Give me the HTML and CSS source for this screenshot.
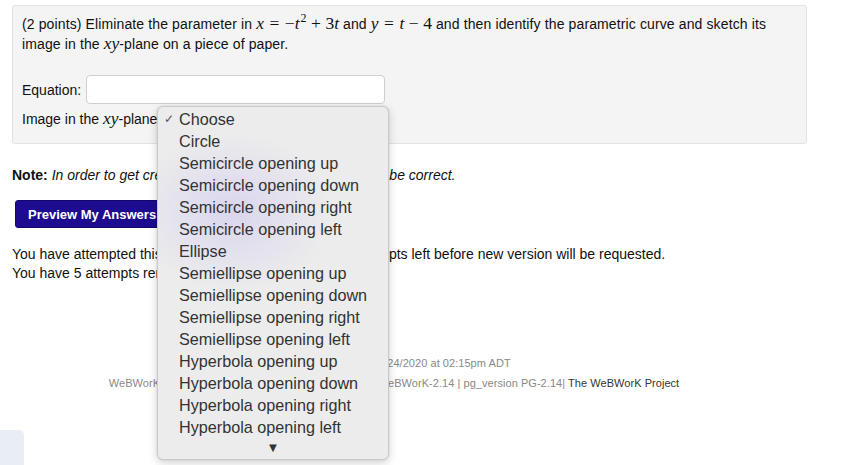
FILE: index.html
```html
<!DOCTYPE html>
<html>
<head>
<meta charset="utf-8">
<link rel="stylesheet" href="styles.css">
</head>
<body>
<div class="page">
  <div class="problem">
    <p class="statement">(2 points) Eliminate the parameter in <span class="math"><i>x</i><span class="rel">=</span>−<i>t</i><sup>2</sup><span class="bin">+</span>3<i>t</i></span> and <span class="math"><i>y</i><span class="rel">=</span><i>t</i><span class="bin">−</span>4</span> and then identify the parametric curve and sketch its image in the <span class="math"><i>xy</i></span>-plane on a piece of paper.</p>
    <div class="row eq-row">
      <span class="label">Equation:</span>
      <span class="input"></span>
    </div>
    <div class="row sel-row">
      <span class="label">Image in the <span class="math"><i>xy</i></span>-plane:</span>
      <span class="select-anchor">
        <span class="select"></span>
        <div class="popup">
          <ul class="options">
            <li class="checked"><span class="check">✓</span>Choose</li>
            <li>Circle</li>
            <li>Semicircle opening up</li>
            <li>Semicircle opening down</li>
            <li>Semicircle opening right</li>
            <li>Semicircle opening left</li>
            <li>Ellipse</li>
            <li>Semiellipse opening up</li>
            <li>Semiellipse opening down</li>
            <li>Semiellipse opening right</li>
            <li>Semiellipse opening left</li>
            <li>Hyperbola opening up</li>
            <li>Hyperbola opening down</li>
            <li>Hyperbola opening right</li>
            <li>Hyperbola opening left</li>
          </ul>
          <div class="scroll-arrow">▼</div>
        </div>
      </span>
    </div>
  </div>

  <p class="note"><b>Note:</b> <i>In order to get credit for this problem all answers must be correct.</i></p>

  <div class="buttons">
    <button class="btn">Preview My Answers</button>
  </div>

  <p class="attempts">You have attempted this problem 10 times. You have 3 attempts left before new version will be requested.<br>You have 5 attempts remaining.</p>

  <div class="footer">
    <p class="gen">Page generated at 03/24/2020 at 02:15pm ADT</p>
    <p class="copy">WeBWorK © 1996-2019 | theme: math4 | ww_version: WeBWorK-2.14 | pg_version PG-2.14| <span class="proj">The WeBWorK Project</span></p>
  </div>
</div>
<div class="corner-tab"></div>
</body>
</html>
```

FILE: styles.css
```css
html, body {
  margin: 0;
  padding: 0;
  background: #ffffff;
}
body {
  font-family: "Liberation Sans", Arial, sans-serif;
  font-size: 14px;
  color: #111;
  width: 864px;
  height: 465px;
  overflow: hidden;
  position: relative;
}
.page {
  padding: 5px 0 0 12px;
}
.problem {
  width: 775px;
  margin: 0;
  background: #f4f4f4;
  border: 1px solid #e2e2e2;
  border-radius: 3px;
  padding: 8px 9px 10px 9px;
}
.statement {
  margin: 0;
  line-height: 20px;
  width: 762px;
  letter-spacing: 0.12px;
}
.math {
  font-family: "Liberation Serif", "Times New Roman", serif;
  font-size: 17.5px;
  line-height: 0;
  letter-spacing: 0;
}
.math i {
  font-style: italic;
}
.math sup {
  font-size: 12px;
  line-height: 0;
  vertical-align: 7px;
  margin-left: 1px;
}
.rel {
  margin: 0 5.5px;
}
.bin {
  margin: 0 4.5px;
}
.row {
  display: flex;
  align-items: center;
}
.eq-row {
  margin-top: 21px;
  height: 29px;
}
.label {
  margin-right: 5px;
}
.input {
  display: block;
  width: 297px;
  height: 27px;
  background: #fff;
  border: 1px solid #cfcfcf;
  border-radius: 4px;
}
.sel-row {
  margin-top: 1px;
  height: 28px;
}
.sel-row .label {
  margin-right: 0;
  width: 135px;
  white-space: nowrap;
}
.select-anchor {
  position: relative;
  display: block;
  width: 232px;
  height: 24px;
}
.select {
  display: block;
  width: 230px;
  height: 22px;
  border: 1px solid #cfcfcf;
  border-radius: 5px;
  background: #f7f7f7;
}
.popup {
  position: absolute;
  left: 0;
  top: -1px;
  width: 230px;
  height: 352px;
  border: 1px solid #c9c9c9;
  border-radius: 6px;
  background:
    radial-gradient(ellipse 100px 80px at 75px 105px, rgba(208, 202, 240, 0.65), rgba(208, 202, 240, 0) 100%),
    #ececec;
  box-shadow: 0 3px 10px rgba(0, 0, 0, 0.18), 0 0 2px rgba(0, 0, 0, 0.1);
  z-index: 10;
  font-size: 16.2px;
  color: #333;
}
.options {
  list-style: none;
  margin: 0;
  padding: 1px 0 0 0;
}
.options li {
  height: 22px;
  line-height: 22px;
  padding-left: 21px;
  position: relative;
  white-space: nowrap;
}
.check {
  position: absolute;
  left: 6px;
  top: 0;
  font-size: 12px;
  color: #555;
}
.scroll-arrow {
  text-align: center;
  font-size: 13px;
  line-height: 20px;
  color: #333;
}
.note {
  margin: 22px 0 0 0;
  line-height: 18px;
}
.note b {
  font-weight: bold;
}
.buttons {
  margin-top: 16px;
  padding-left: 3px;
}
.btn {
  font-family: "Liberation Sans", Arial, sans-serif;
  font-size: 13px;
  font-weight: bold;
  color: #fff;
  background: #1d0c8f;
  border: 1px solid #14076a;
  border-radius: 3px;
  height: 28px;
  padding: 0 12px;
  width: 170px;
  text-align: left;
}
.attempts {
  margin: 17px 0 0 0;
  line-height: 19px;
}
.footer {
  width: 764px;
  text-align: center;
  margin-top: 70px;
  font-size: 11px;
  letter-spacing: 0.05px;
  color: #888;
}
.footer p {
  margin: 0;
  line-height: 20px;
}
.proj {
  color: #333;
}
.corner-tab {
  position: absolute;
  left: 0;
  top: 430px;
  width: 24px;
  height: 40px;
  background: #e9eef6;
  border-radius: 0 5px 0 0;
}
```
